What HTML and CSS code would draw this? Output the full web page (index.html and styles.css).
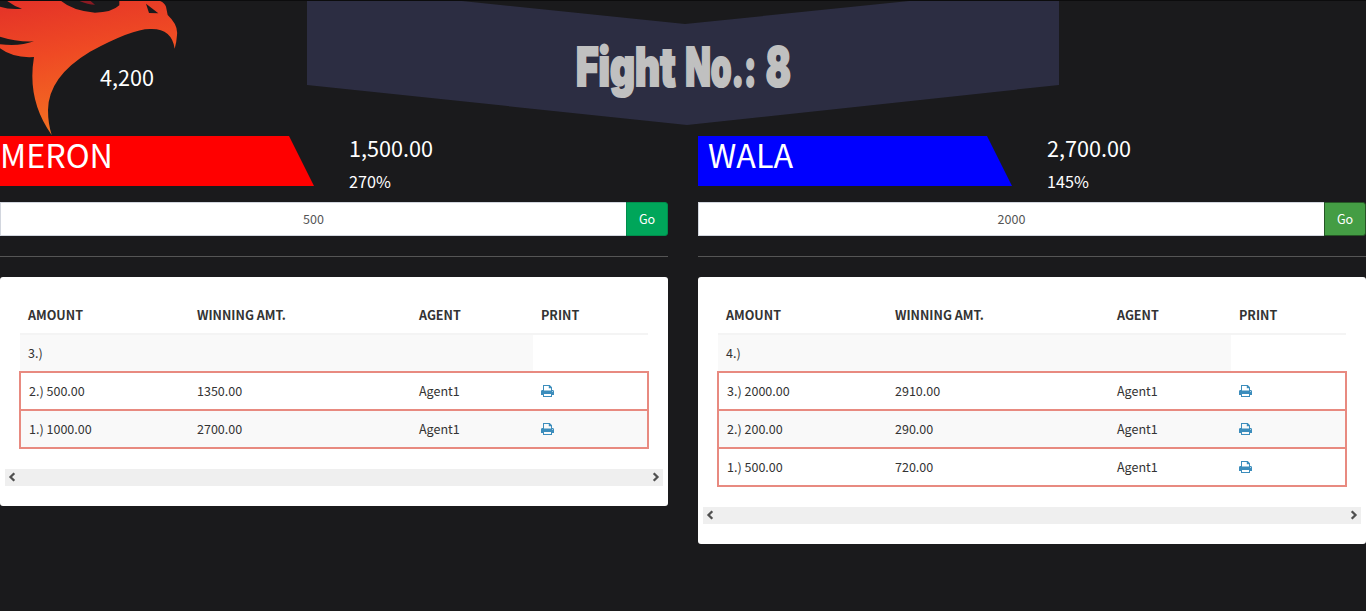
FILE: index.html
```
<!DOCTYPE html>
<html lang="en">
<head>
<meta charset="utf-8">
<title>Fight No.: 8</title>
<link rel="stylesheet" href="styles.css">
</head>
<body>
<svg class="defs" width="0" height="0"><defs>
<symbol id="print" viewBox="0 0 13 12"><path fill="#3c8dbc" fill-rule="evenodd" d="M2 0h6.800L11 2.200V5h.6C12.400 5 13 5.600 13 6.400V10h-2v2H2v-2H0V6.400C0 5.600.6 5 1.400 5H2zM3 1v4.500h7V3.200H7.800V1zM3 9v2h7V9zM11.200 6v.8h.8V6z"/></symbol>
<symbol id="chev-l" viewBox="0 0 8 10"><path fill="none" stroke="#505050" stroke-width="2.300" d="M6.300 1.200 2.500 5l3.800 3.800"/></symbol>
<symbol id="chev-r" viewBox="0 0 8 10"><path fill="none" stroke="#505050" stroke-width="2.300" d="M1.700 1.200 5.500 5 1.700 8.800"/></symbol>
</defs></svg>
<header class="top">
  <svg class="bird" viewBox="0 0 540 408" width="180" height="136">
    <defs><linearGradient id="fire" x1="0" y1="0" x2="0.25" y2="1"><stop offset="0" stop-color="#e33128"/><stop offset="0.45" stop-color="#ef4a24"/><stop offset="1" stop-color="#f37021"/></linearGradient></defs>
    <path fill="url(#fire)" d="M0 20Q30 30 66 26Q40 18 18 0H180Q215 32 285 38Q335 38 358 16V0H472Q493 6 498 20L503 45Q535 75 531 105Q530 125 524 146Q515 85 452 87Q400 85 270 155Q145 230 144 330Q144 370 155 405Q80 300 102 171Q40 175 0 145V133Q60 140 102 124Q50 126 0 110Z"/>
    <path fill="#1a1a1c" d="M438 11 475 40 447 39Z"/>
    <path fill="#8b1a22" d="M232 0H268L285 14Q260 14 232 0Z"/>
  </svg>
  <div class="total">4,200</div>
  <div class="banner">
    <svg class="title" viewBox="0 0 752 125" width="752" height="125">
      <g class="title-text" transform="scale(.66 1)">
        <text x="407.500" y="86.500" textLength="151" lengthAdjust="spacingAndGlyphs">Fight</text>
        <text x="573" y="86.500" textLength="108" lengthAdjust="spacingAndGlyphs">No.:</text>
        <text x="695" y="86.500" textLength="38" lengthAdjust="spacingAndGlyphs">8</text>
      </g>
    </svg>
  </div>
</header>
<main class="sides">
  <section class="side">
    <div class="head">
      <div class="flag meron">MERON</div>
      <div class="stats"><div class="sum">1,500.00</div><div class="pct">270%</div></div>
    </div>
    <form class="bet"><div class="amount">500</div><button type="button" class="go">Go</button></form>
    <hr class="rule">
    <div class="card">
      <div class="table">
        <div class="row th"><span>AMOUNT</span><span>WINNING AMT.</span><span>AGENT</span><span>PRINT</span></div>
        <div class="row next"><span>3.)</span></div>
        <div class="row line"><span>2.) 500.00</span><span>1350.00</span><span>Agent1</span><span><svg class="pr"><use href="#print"/></svg></span></div>
        <div class="row line odd"><span>1.) 1000.00</span><span>2700.00</span><span>Agent1</span><span><svg class="pr"><use href="#print"/></svg></span></div>
      </div>
      <div class="scroll"><svg class="chev"><use href="#chev-l"/></svg><svg class="chev"><use href="#chev-r"/></svg></div>
    </div>
  </section>
  <section class="side">
    <div class="head">
      <div class="flag wala">WALA</div>
      <div class="stats"><div class="sum">2,700.00</div><div class="pct">145%</div></div>
    </div>
    <form class="bet"><div class="amount">2000</div><button type="button" class="go alt">Go</button></form>
    <hr class="rule">
    <div class="card">
      <div class="table">
        <div class="row th"><span>AMOUNT</span><span>WINNING AMT.</span><span>AGENT</span><span>PRINT</span></div>
        <div class="row next"><span>4.)</span></div>
        <div class="row line"><span>3.) 2000.00</span><span>2910.00</span><span>Agent1</span><span><svg class="pr"><use href="#print"/></svg></span></div>
        <div class="row line odd"><span>2.) 200.00</span><span>290.00</span><span>Agent1</span><span><svg class="pr"><use href="#print"/></svg></span></div>
        <div class="row line"><span>1.) 500.00</span><span>720.00</span><span>Agent1</span><span><svg class="pr"><use href="#print"/></svg></span></div>
      </div>
      <div class="scroll"><svg class="chev"><use href="#chev-l"/></svg><svg class="chev"><use href="#chev-r"/></svg></div>
    </div>
  </section>
</main>
</body>
</html>
```
FILE: styles.css
```
* { box-sizing: border-box; }
body {
  margin: 0;
  height: 611px;
  overflow: hidden;
  border-top: 1px solid #0c0c0d;
  background: #1a1a1c;
  color: #333;
  font: 12.54px/20px "Noto Sans CJK JP", "Noto Sans", sans-serif;
}
.defs { position: absolute; }
.top { display: flex; height: 135px; color: #fff; }
.bird { flex: none; margin-top: -1px; }
.total {
  flex: none;
  width: 127px;
  margin: 0 80px 0 -80px;
  padding-top: 63px;
  font-size: 21.6px;
  line-height: 26px;
}
.banner {
  flex: none;
  width: 752px;
  height: 124px;
  background: #2c2d42;
  clip-path: polygon(0 0, 155px 0, 378px 23px, 602px 0, 100% 0, 100% 84px, 380px 100%, 0 84px);
}
.title { display: block; margin-top: -1px; }
.title-text {
  font: 900 53px Inter, "Open Sans", sans-serif;
  fill: #c0c0c0;
  stroke: #c0c0c0;
  stroke-width: 2.200px;
}
.sides { display: flex; gap: 30px; }
.side { width: 668px; }
.head { display: flex; height: 50px; gap: 35px; }
.flag {
  width: 314px;
  height: 50px;
  color: #fff;
  font-size: 32.25px;
  line-height: 36px;
  clip-path: polygon(0 0, 289px 0, 100% 100%, 0 100%);
}
.meron { background: #f00; }
.wala { background: #00f; padding-left: 10px; }
.stats { color: #fff; margin-top: -1px; }
.sum { font-size: 21.6px; line-height: 26px; height: 34px; }
.pct { font-size: 16.2px; line-height: 24px; }
.bet { display: flex; height: 34px; margin: 16px 0 20px; }
.amount {
  flex: 1;
  border: 1px solid #d2d6de;
  border-right: 0;
  background: #fff;
  color: #555;
  text-align: center;
  line-height: 32px;
}
.go {
  width: 42px;
  padding: 0;
  border: 1px solid #008d4c;
  border-radius: 0 3px 3px 0;
  background: #00a65a;
  color: #fff;
  font: inherit;
}
.go.alt { background: #449d44; border-color: #255625; }
.rule { height: 1px; margin: 0 0 20px; border: 0; background: #555; }
.card { background: #fff; border-radius: 3px; padding: 20px 5px; }
.table { margin: 0 15px 20px; }
.row {
  display: grid;
  grid-template-columns: 169px 222px 122px 1fr;
  height: 38px;
  padding-left: 8px;
  line-height: 36px;
}
.th { font-weight: 700; border-bottom: 2px solid #f4f4f4; }
.next { height: 37px; background: linear-gradient(#f9f9f9, #f9f9f9) 0 0 / 513px 100% no-repeat; }
.line {
  grid-template-columns: 168px 222px 122px 1fr;
  height: 40px;
  margin: -2px -1px 0;
  border: 2px solid #e88a80;
}
.next + .line { margin-top: -1px; }
.line.odd { background: #f9f9f9; }
.pr { display: block; width: 13px; height: 12px; margin-top: 12px; }
.scroll { display: flex; justify-content: space-between; height: 17px; padding: 3px 3px 0; background: #efefef; }
.chev { width: 8px; height: 10px; }
```
